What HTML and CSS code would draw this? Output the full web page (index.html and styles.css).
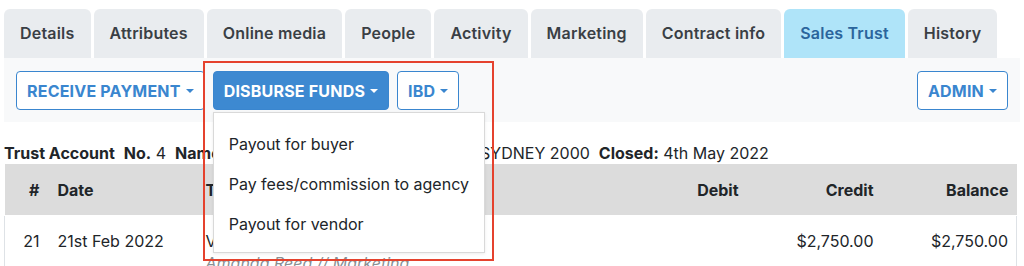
FILE: index.html
```html
<!DOCTYPE html>
<html lang="en">
<head>
  <meta charset="UTF-8" />
  <meta name="viewport" content="width=device-width, initial-scale=1.0" />
  <title>Sales Trust</title>
  <link rel="stylesheet" href="styles.css">
</head>
<body>
  <div class="page">
    <div class="tabs">
      <div class="tab">Details</div>
      <div class="tab">Attributes</div>
      <div class="tab">Online media</div>
      <div class="tab">People</div>
      <div class="tab">Activity</div>
      <div class="tab">Marketing</div>
      <div class="tab">Contract info</div>
      <div class="tab active">Sales Trust</div>
      <div class="tab">History</div>
    </div>

    <div class="toolbar">
      <div class="btn-group">
        <button class="btn">Receive payment <span class="caret"></span></button>
        <div class="dropdown">
          <button class="btn primary">Disburse funds <span class="caret"></span></button>
          <div class="dropdown-menu">
            <div class="menu-item">Payout for buyer</div>
            <div class="menu-item">Pay fees/commission to agency</div>
            <div class="menu-item">Payout for vendor</div>
          </div>
        </div>
        <button class="btn">IBD <span class="caret"></span></button>
      </div>
      <button class="btn">Admin <span class="caret"></span></button>
    </div>

    <div class="info">
      <b>Trust Account</b>&nbsp; <b>No.</b> 4&nbsp; <b>Name:</b> Harbour Realty Pty Ltd, 12 Pitt St SYDNEY 2000&nbsp; <b>Closed:</b> 4th May 2022
    </div>

    <table class="ledger">
      <colgroup>
        <col style="width:43px">
        <col style="width:148px">
        <col>
        <col style="width:147px">
        <col style="width:135px">
        <col style="width:135px">
      </colgroup>
      <thead>
        <tr>
          <th class="num">#</th>
          <th>Date</th>
          <th>Transaction</th>
          <th class="num">Debit</th>
          <th class="num">Credit</th>
          <th class="num">Balance</th>
        </tr>
      </thead>
      <tbody>
        <tr>
          <td class="num">21</td>
          <td>21st Feb 2022</td>
          <td>Vendor deposit<br><span class="sub">Amanda Reed // Marketing</span></td>
          <td class="num"></td>
          <td class="num">$2,750.00</td>
          <td class="num">$2,750.00</td>
        </tr>
      </tbody>
    </table>

    <div class="highlight"></div>
  </div>
</body>
</html>
```

FILE: styles.css
```css
body {
  margin: 0;
  font-family: Inter, "Noto Sans", sans-serif;
  color: #212529;
  background: #fff;
  overflow: hidden;
}
.page {
  position: relative;
  padding: 9px 4px 0;
}
.tabs {
  display: flex;
  gap: 3px;
}
.tab {
  flex-shrink: 0;
  white-space: nowrap;
  height: 49px;
  line-height: 49px;
  padding: 0 16px;
  background: #e9ecef;
  border-radius: 6px 6px 0 0;
  font-size: 16px;
  font-weight: 600;
  letter-spacing: 0.2px;
  color: #3a3f45;
}
.tab.active {
  background: #afe4f9;
  color: #2b659c;
}
.toolbar {
  display: flex;
  justify-content: space-between;
  background: #f8f9fa;
  padding: 13px 12px 12px;
}
.btn-group {
  display: flex;
  gap: 8px;
}
.btn {
  height: 39px;
  padding: 0 10px;
  font-family: inherit;
  font-size: 16px;
  font-weight: 700;
  letter-spacing: 0.2px;
  text-transform: uppercase;
  white-space: nowrap;
  color: #3a86cf;
  background: #fff;
  border: 1px solid #3a86cf;
  border-radius: 4px;
  display: flex;
  align-items: center;
  gap: 5px;
}
.btn.primary {
  background: #3d89d1;
  color: #fff;
}
.caret {
  width: 0;
  height: 0;
  border-left: 4px solid transparent;
  border-right: 4px solid transparent;
  border-top: 4px solid currentColor;
}
.dropdown {
  position: relative;
}
.dropdown-menu {
  position: absolute;
  top: 41px;
  left: 0;
  width: 270px;
  padding: 11px 0 8px;
  background: #fff;
  border: 1px solid #d9d9d9;
  box-shadow: 0 1px 3px rgba(0, 0, 0, 0.08);
  z-index: 5;
}
.menu-item {
  height: 40px;
  line-height: 40px;
  padding: 0 15px;
  font-size: 16px;
  color: #212529;
  white-space: nowrap;
}
.info {
  padding-top: 20px;
  line-height: 22px;
  height: 22px;
  font-size: 16px;
  white-space: nowrap;
}
.ledger {
  width: calc(100% - 3px);
  table-layout: fixed;
  border-collapse: collapse;
  font-size: 16px;
}
.ledger th {
  height: 51px;
  background: #dcdcdc;
  font-weight: 700;
  text-align: left;
  padding: 0 0 0 10px;
}
.ledger td {
  vertical-align: top;
  padding: 14px 0 0 10px;
  line-height: 22px;
  border-top: 1px solid #fff;
}
.ledger tbody tr {
  border-left: 1px solid #dee2e6;
  border-right: 1px solid #dee2e6;
}
.ledger .num {
  text-align: right;
  padding-left: 0;
  padding-right: 8px;
}
.sub {
  font-style: italic;
  color: #8a8f94;
}
.highlight {
  position: absolute;
  left: 203px;
  top: 61px;
  width: 287px;
  height: 196px;
  border: 2.5px solid #e5422e;
  z-index: 6;
}
```
